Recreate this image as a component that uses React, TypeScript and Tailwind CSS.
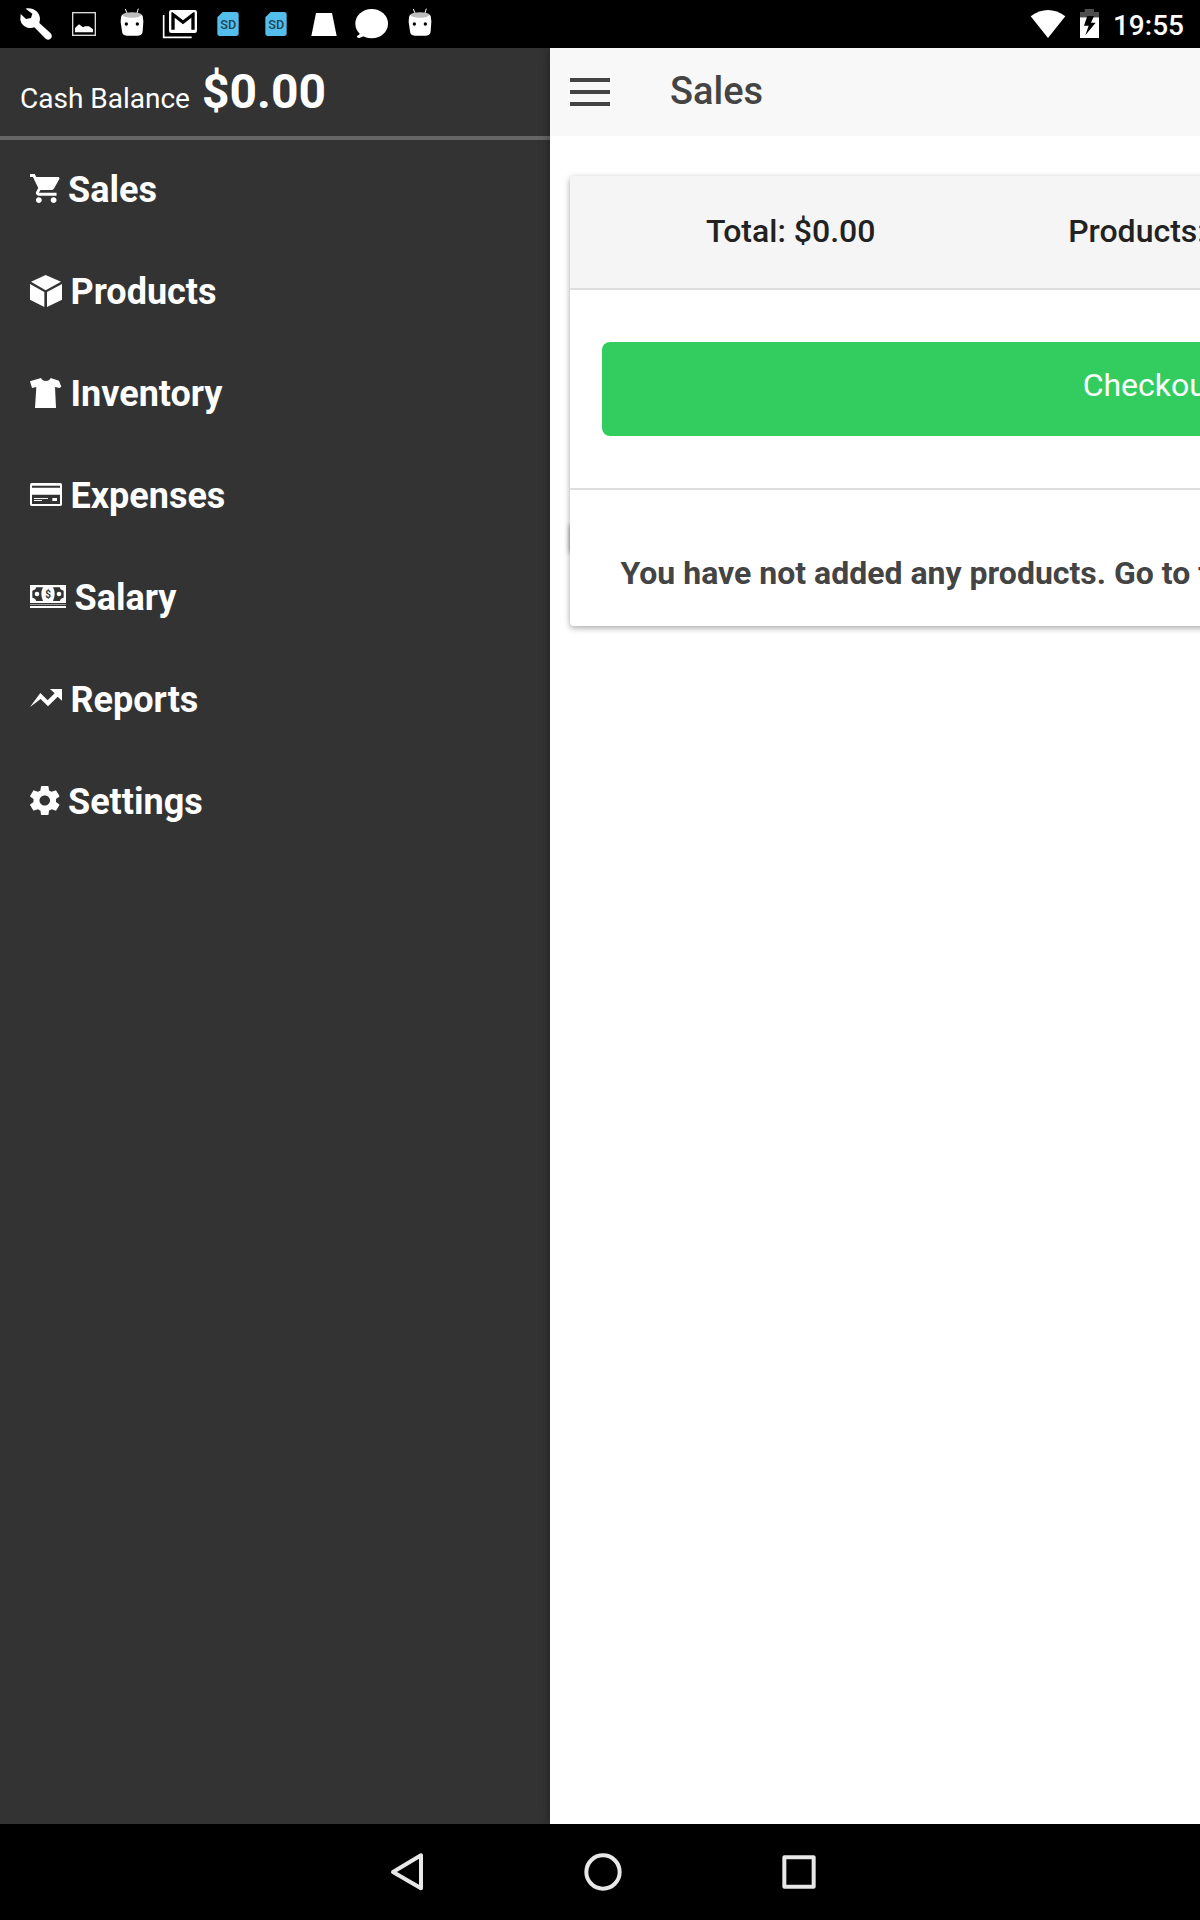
import React from "react";

type IconProps = { box: string; w: number; h: number; y?: number; children: React.ReactNode };

/* Icon drawn on a fine grid of three units per pixel */
function Icon({ box, w, h, y = 0, children }: IconProps) {
  return (
    <svg
      viewBox={box}
      width={w}
      height={h}
      preserveAspectRatio="none"
      fill="#fff"
      className="block shrink-0"
      style={{ marginTop: y }}
    >
      {children}
    </svg>
  );
}

const Robot = () => (
  <Icon box="324 0 144 144" w={48} h={48}>
    <path d="M376 27l6 15M415 26l-5 16" stroke="#fff" strokeWidth="3" />
    <path d="M362 66q0-6 2-18 2-8 32-8t32 8q2 12 2 18l-2 28q-1 13-14 13h-34q-13 0-14-13z" />
    <ellipse cx="396" cy="45" rx="28" ry="8" fill="#bdbdbd" />
    <circle cx="379" cy="72" r="5" fill="#000" />
    <circle cx="412" cy="72" r="5" fill="#000" />
  </Icon>
);

const SdCard = () => (
  <Icon box="612 0 144 144" w={48} h={48}>
    <path d="M668 36h40q8 0 8 8v56q0 8-8 8h-48q-8 0-8-8v-48z" fill="#54bdeb" />
    <text x="685" y="86" textAnchor="middle" fontFamily="Roboto, sans-serif" fontSize="38" fontWeight="500" fill="#1f4656">
      SD
    </text>
  </Icon>
);

function StatusBar() {
  return (
    <header className="flex h-12 items-center bg-black pl-3 pr-4 text-white">
      <Icon box="36 0 144 144" w={48} h={48}>
        <path d="M77 26c21-5 43 10 43 31l-2 12 34 31c5 6 4 11 1 15-4 5-11 5-16 1L103 82c-18 7-39-4-42-23l1-17 16 15 15-3 4-13z" />
      </Icon>
      <Icon box="180 0 144 144" w={48} h={48}>
        <rect x="218" y="38" width="68" height="68" fill="none" stroke="#ddd" strokeWidth="4" />
        <path d="M225 97V84l12-11 12 9 6-3 12 0 12 9v9z" />
      </Icon>
      <Robot />
      <Icon box="468 0 144 144" w={48} h={48}>
        <path d="M491 45v67h84" fill="none" stroke="#fff" strokeWidth="5" />
        <path fillRule="evenodd" d="M514 30h70q7 0 7 7v55q0 7-7 7h-70q-7 0-7-7V37q0-7 7-7zM514 37v52h10V53l25 20 25-20v36h10V37h-4l-31 24-31-24z" />
      </Icon>
      <SdCard />
      <SdCard />
      <Icon box="900 0 144 144" w={48} h={48}>
        <path d="M948 39h48l14 69h-76z" />
      </Icon>
      <Icon box="1044 0 144 144" w={48} h={48}>
        <ellipse cx="1115" cy="71" rx="49" ry="44" />
        <path d="M1080 93q2 12-10 15 2 8 10 5 10-3 16-9z" />
      </Icon>
      <Robot />
      <div className="ml-auto flex items-center">
        <Icon box="90 0 108 144" w={36} h={48}>
          <path d="M92 49q52-38 104 0l-52 65z" />
        </Icon>
        <Icon box="198 0 141 144" w={47} h={48}>
          <path d="M254 27h28v9h15v16h-57V36h14z" fill="#4d4d4d" />
          <path d="M240 52h57v62h-57z" />
          <path d="M262 48l-10 29h14l-10 29 31-38h-14l9-20z" fill="#000" />
        </Icon>
        <span className="pt-[3px] text-[28px] font-medium leading-[50px]">19:55</span>
      </div>
    </header>
  );
}

const items = [
  {
    name: "Sales",
    icon: (
      <Icon box="1 2 20 20" w={29.5} h={29}>
        <path d="M7 18c-1.1 0-1.99.9-1.99 2S5.9 22 7 22s2-.9 2-2-.9-2-2-2zM1 2v2h2l3.6 7.59-1.35 2.45c-.16.28-.25.61-.25.96 0 1.1.9 2 2 2h12v-2H7.42c-.14 0-.25-.11-.25-.25l.03-.12.9-1.63h7.45c.75 0 1.41-.41 1.75-1.03l3.58-6.49c.08-.14.12-.31.12-.48 0-.55-.45-1-1-1H5.21l-.94-2H1zm16 16c-1.1 0-1.99.9-1.99 2s.89 2 1.99 2 2-.9 2-2-.9-2-2-2z" />
      </Icon>
    ),
  },
  {
    name: "Products",
    icon: (
      <Icon box="90 374 96 96" w={32} h={32}>
        <path d="M137 374l46 20-46 26-44-26zM90 401l43 24v45l-43-22zM186 401l-45 24v45l45-22z" />
      </Icon>
    ),
  },
  {
    name: "Inventory",
    icon: (
      <Icon box="90 683 96 90" w={32} h={30}>
        <path d="M123 683C127 695 148 695 152 683L177 691L184 709L178 713L165 710L168 773H105L109 710L96 713L90 693Z" />
      </Icon>
    ),
  },
  {
    name: "Expenses",
    icon: (
      <Icon box="90 159 96 69" w={32} h={23}>
        <path fillRule="evenodd" d="M95 159h86q5 0 5 5v59q0 5-5 5H95q-5 0-5-5v-59q0-5 5-5zM96 167v6h84v-6zM96 194v28h84v-28z" />
        <path d="M102 204h42v3h-42zM102 210h24v3h-24zM157 204h14v9h-14z" />
      </Icon>
    ),
  },
  {
    name: "Salary",
    icon: (
      <Icon box="90 465 108 69" w={36} h={23}>
        <path d="M90 465h108v54H90zM90 528h108v6H90z" />
        <path d="M90 522h108v3H90z" fill="#999" />
        <path d="M108 472h21q-10 20 0 41h-21q0-8-11-10v-21q11-2 11-10zM180 472h-21q10 20 0 41h21q0-8 11-10v-21q-11-2-11-10z" fill="#333" />
        <circle cx="111" cy="492" r="7" />
        <circle cx="177" cy="492" r="7" />
        <text x="144" y="503" textAnchor="middle" fontFamily="Roboto, sans-serif" fontSize="30" fontWeight="700" fill="#333">
          $
        </text>
      </Icon>
    ),
  },
  {
    name: "Reports",
    icon: (
      <Icon box="90 777 96 54" w={32} h={18} y={-1}>
        <path d="M90 831L121 789l22 22 21-21-14-13h36v35l-13-12-29 29-22-22z" />
      </Icon>
    ),
  },
  {
    name: "Settings",
    icon: (
      <Icon box="2.2 2 19.6 20" w={29.5} h={29}>
        <path d="M19.43 12.98c.04-.32.07-.64.07-.98s-.03-.66-.07-.98l2.11-1.65c.19-.15.24-.42.12-.64l-2-3.46c-.12-.22-.39-.3-.61-.22l-2.49 1c-.52-.4-1.08-.73-1.69-.98l-.38-2.65C14.46 2.18 14.25 2 14 2h-4c-.25 0-.46.18-.49.42l-.38 2.65c-.61.25-1.17.59-1.69.98l-2.49-1c-.23-.09-.49 0-.61.22l-2 3.46c-.13.22-.07.49.12.64l2.11 1.65c-.04.32-.07.65-.07.98s.03.66.07.98l-2.11 1.65c-.19.15-.24.42-.12.64l2 3.46c.12.22.39.3.61.22l2.49-1c.52.4 1.08.73 1.69.98l.38 2.65c.03.24.24.42.49.42h4c.25 0 .46-.18.49-.42l.38-2.65c.61-.25 1.17-.59 1.69-.98l2.49 1c.23.09.49 0 .61-.22l2-3.46c.12-.22.07-.49-.12-.64l-2.11-1.65zM12 15.5c-1.93 0-3.5-1.57-3.5-3.5s1.57-3.5 3.5-3.5 3.5 1.57 3.5 3.5-1.57 3.5-3.5 3.5z" />
      </Icon>
    ),
  },
];

function Sidebar() {
  return (
    <aside className="w-[550px] shrink-0 bg-[#333] text-white">
      <div className="flex h-[92px] items-baseline gap-3 border-b-4 border-[#666] pl-5 leading-[88px]">
        <span className="text-[28px]">Cash Balance</span>
        <span className="text-[48px] font-bold">$0.00</span>
      </div>
      <nav>
        {items.map((item) => (
          <a key={item.name} className="flex h-[102px] items-center gap-[8.5px] pb-[5px] pl-[30px] text-[36px] font-bold">
            {item.icon}
            <span className="pt-1 leading-[93px]">{item.name}</span>
          </a>
        ))}
      </nav>
    </aside>
  );
}

function SalesPanel() {
  return (
    <main className="relative min-w-0 flex-1 overflow-hidden bg-white shadow-[0_0_10px_rgba(0,0,0,0.4)]">
      <div className="flex h-[88px] bg-[#f8f8f8] pl-5">
        <div className="mt-[30px] flex w-10 flex-col gap-2">
          <i className="h-1 bg-[#444]" />
          <i className="h-1 bg-[#444]" />
          <i className="h-1 bg-[#444]" />
        </div>
        <h1 className="ml-[60px] text-[38px] font-medium leading-[87px] text-[#444]">Sales</h1>
      </div>
      <div className="relative ml-5 mt-10 w-[1160px]">
        <div className="absolute left-0 top-[348px] h-7 w-40 shadow-[0_1px_5px_rgba(0,0,0,0.5)]" />
        <section className="relative rounded-[4px] bg-white shadow-[0_2px_6px_rgba(0,0,0,0.35)]">
          <div className="flex h-[114px] rounded-t-[4px] border-b-2 border-[#ddd] bg-[#f5f5f5] px-[41px] text-center text-[32px] font-medium leading-[111px] text-[#222]">
            <span className="flex-1">Total: $0.00</span>
            <span className="flex-1">Products: 0</span>
            <span className="flex-1" />
          </div>
          <div className="h-[200px] border-b-2 border-[#ddd] px-8 pt-[52px]">
            <button className="block h-[94px] w-full rounded-[8px] bg-[#33cd5f] pb-2 text-[32px] leading-[86px] text-white">
              Checkout
            </button>
          </div>
          <p className="h-[136px] whitespace-nowrap pl-[50.5px] pt-[63px] text-[32px] font-bold leading-10 text-[#444]">
            You have not added any products. Go to the
          </p>
        </section>
      </div>
    </main>
  );
}

function NavigationBar() {
  return (
    <footer className="flex h-24 items-center justify-center bg-black">
      <svg width="480" height="96" viewBox="0 72 1440 288" fill="none" stroke="#e8e8e8" strokeWidth="12" strokeLinejoin="round">
        <path d="M183 166v99L99 216z" />
        <circle cx="729" cy="216" r="50" />
        <rect x="1273" y="172" width="88" height="88" />
      </svg>
    </footer>
  );
}

export default function App() {
  return (
    <div className="flex h-[1920px] w-[1200px] flex-col overflow-hidden bg-black font-[Roboto,sans-serif]">
      <StatusBar />
      <div className="flex min-h-0 flex-1 overflow-hidden">
        <Sidebar />
        <SalesPanel />
      </div>
      <NavigationBar />
    </div>
  );
}
